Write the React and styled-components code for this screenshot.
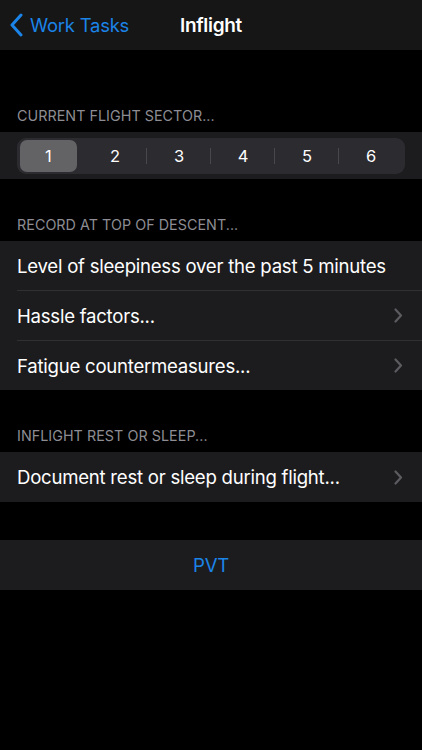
import React from "react";
import styled, { createGlobalStyle } from "styled-components";

const Global = createGlobalStyle`
  html, body { margin: 0; padding: 0; background: #000; }
  body { font-family: Inter, "Liberation Sans", sans-serif; -webkit-font-smoothing: antialiased; }
  * { box-sizing: border-box; }
`;

const Page = styled.div`
  width: 422px;
  min-height: 750px;
  background: #000;
  display: flex;
  flex-direction: column;
`;

const NavBar = styled.div`
  height: 50px;
  background: #161616;
  display: grid;
  grid-template-columns: 1fr auto 1fr;
  align-items: center;
`;

const Back = styled.div`
  display: flex;
  align-items: center;
  gap: 7px;
  padding-left: 10px;
  color: #1b84e8;
  font-size: 18.4px;
  letter-spacing: -0.2px;
`;

const Title = styled.div`
  color: #fff;
  font-size: 19px;
  font-weight: 600;
  letter-spacing: -0.3px;
`;

const SectionHeader = styled.div`
  padding: 0 17px 7px;
  margin-top: ${(p) => p.$top}px;
  color: #8d8d93;
  font-size: 14.3px;
  letter-spacing: 0.05px;
  line-height: 18px;
  height: 25px;
  display: flex;
  align-items: flex-end;
`;

const Group = styled.div`
  background: #1c1c1e;
  display: flex;
  flex-direction: column;
  margin-top: ${(p) => p.$top || 0}px;
`;

const SegmentRow = styled.div`
  height: 47px;
  background: #1c1c1e;
  padding: 6px 17px 5px;
  display: flex;
`;

const Segmented = styled.div`
  flex: 1;
  background: #2c2c30;
  border-radius: 9px;
  padding: 2px;
  display: grid;
  grid-template-columns: repeat(6, 1fr);
`;

const Segment = styled.div`
  position: relative;
  display: flex;
  align-items: center;
  justify-content: center;
  color: #fff;
  font-size: 16.5px;
  border-radius: 7px;
  background: ${(p) => (p.$active ? "#636366" : "transparent")};
  margin-right: ${(p) => (p.$active ? "6px" : "0")};
  margin-left: ${(p) => (p.$active ? "0.5px" : "0")};
  &::before {
    content: "";
    display: ${(p) => (p.$divider ? "block" : "none")};
    position: absolute;
    left: -1px;
    top: 8px;
    bottom: 8px;
    width: 1px;
    background: #48484c;
  }
`;

const Row = styled.div`
  height: ${(p) => p.$h || 50}px;
  display: flex;
  align-items: center;
  justify-content: ${(p) => (p.$center ? "center" : "space-between")};
  margin-left: ${(p) => (p.$center ? "0" : "17px")};
  padding-right: 19px;
  padding-left: ${(p) => (p.$center ? "19px" : "0")};
  color: ${(p) => (p.$link ? "#1b84e8" : "#fff")};
  font-size: 18.6px;
  letter-spacing: -0.25px;
  border-top: ${(p) => (p.$sep ? "1px solid #303033" : "none")};
`;

const Chevron = () => (
  <svg width="9" height="15" viewBox="0 0 9 15" fill="none">
    <path d="M1.5 1.5 L7 7.5 L1.5 13.5" stroke="#5b5b60" strokeWidth="2.2" strokeLinecap="round" strokeLinejoin="round" />
  </svg>
);

const BackChevron = () => (
  <svg width="13" height="24" viewBox="0 0 13 24" fill="none">
    <path d="M11 2 L2 12 L11 22" stroke="#1b84e8" strokeWidth="3" strokeLinecap="round" strokeLinejoin="round" />
  </svg>
);

export default function App() {
  const segs = [1, 2, 3, 4, 5, 6];
  return (
    <Page>
      <Global />
      <NavBar>
        <Back>
          <BackChevron />
          Work Tasks
        </Back>
        <Title>Inflight</Title>
        <div />
      </NavBar>

      <SectionHeader $top={57}>CURRENT FLIGHT SECTOR...</SectionHeader>
      <SegmentRow>
        <Segmented>
          {segs.map((n, i) => (
            <Segment key={n} $active={i === 0} $divider={i > 1}>
              {n}
            </Segment>
          ))}
        </Segmented>
      </SegmentRow>

      <SectionHeader $top={37}>RECORD AT TOP OF DESCENT...</SectionHeader>
      <Group>
        <Row $h={49}>Level of sleepiness over the past 5 minutes</Row>
        <Row $sep>
          Hassle factors...
          <Chevron />
        </Row>
        <Row $sep>
          Fatigue countermeasures...
          <Chevron />
        </Row>
      </Group>

      <SectionHeader $top={37}>INFLIGHT REST OR SLEEP...</SectionHeader>
      <Group>
        <Row>
          Document rest or sleep during flight...
          <Chevron />
        </Row>
      </Group>

      <Group $top={38}>
        <Row $center $link $h={50}>PVT</Row>
      </Group>
    </Page>
  );
}
